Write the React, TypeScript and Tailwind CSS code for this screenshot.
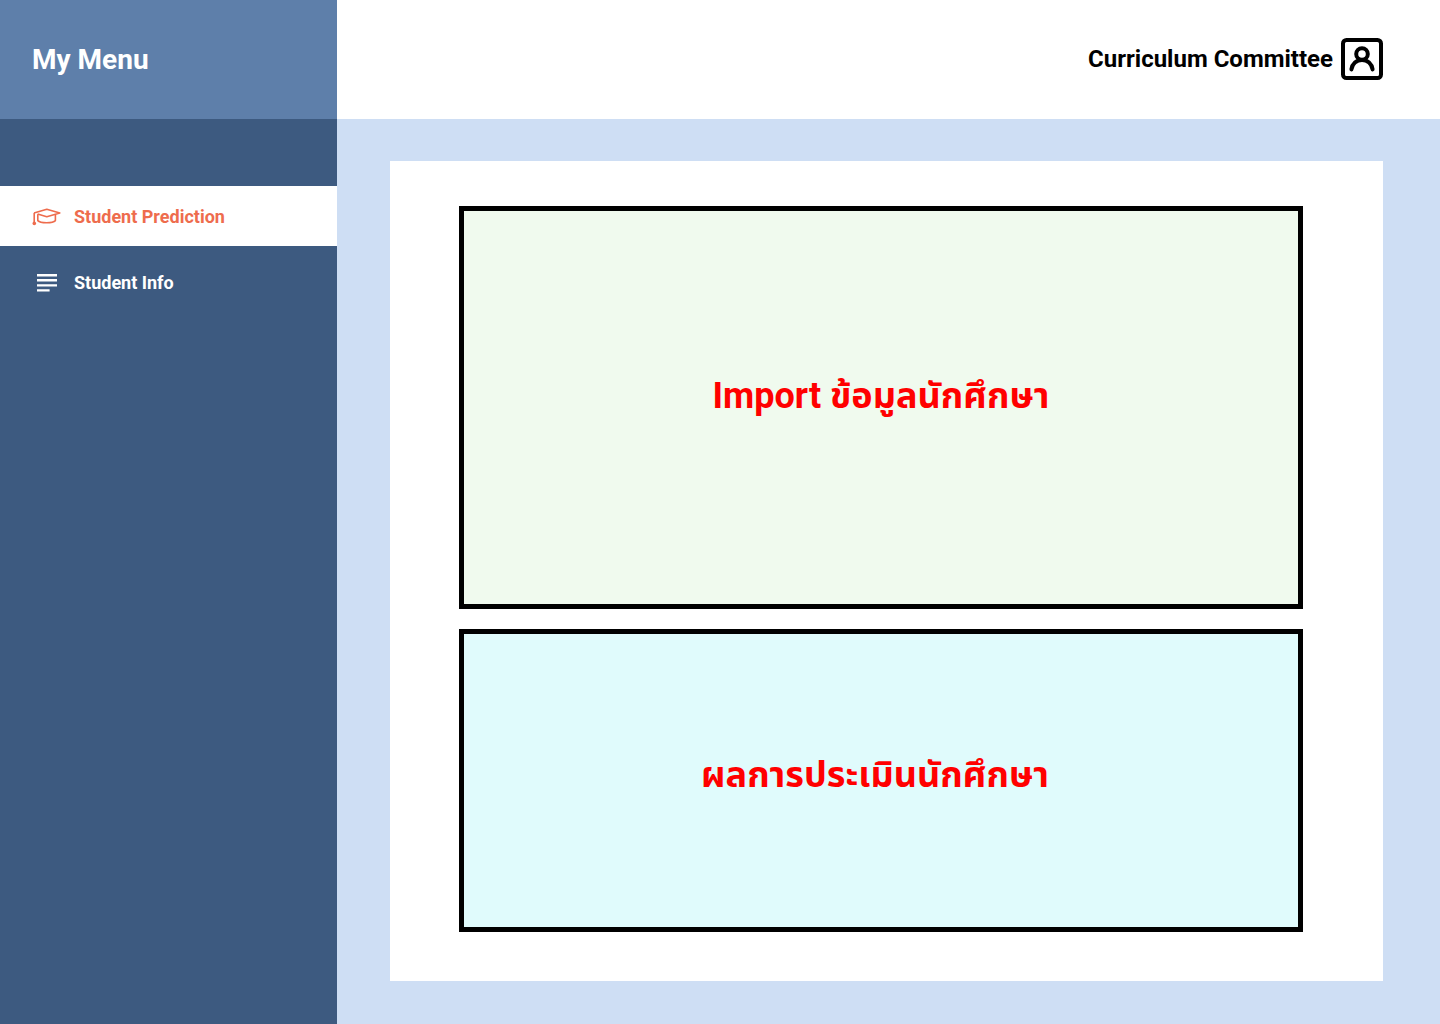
import React from "react";

function CapIcon() {
  return (
    <svg className="h-[18px] w-[30px] shrink-0" viewBox="0 0 30 18" fill="none" stroke="currentColor" strokeWidth="1.6" strokeLinejoin="round" aria-hidden="true">
      <path d="M2 5 14.8 1.2 27.8 5 14.8 8.8 5.6 6" />
      <path d="M2.2 5V14.5" />
      <path d="M5.8 6.2V12.6C8.4 15.4 20.8 15.4 23.4 12.6V6.4" />
      <circle cx="2.3" cy="15.4" r="1.8" fill="currentColor" stroke="none" />
    </svg>
  );
}

function LinesIcon() {
  return (
    <svg className="h-[18px] w-[30px] shrink-0" viewBox="0 0 30 18" fill="currentColor" aria-hidden="true">
      <path d="M5 0h20v2.4H5zM5 5h20v2.4H5zM5 10.2h20v2.4H5zM5 15.2h12.6v2.4H5z" />
    </svg>
  );
}

function UserIcon() {
  return (
    <svg className="size-[42px] shrink-0" viewBox="0 0 42 42" fill="none" stroke="currentColor" strokeWidth="4" strokeLinecap="round" aria-hidden="true">
      <rect x="2" y="2" width="38" height="38" rx="3.5" />
      <circle cx="21" cy="16" r="5.8" />
      <path d="M10.4 31.4C11.2 25.8 15.5 21.9 21 21.9S30.8 25.8 31.6 31.4" />
    </svg>
  );
}

export default function App() {
  return (
    <div className="flex min-h-screen bg-[#cedef4] font-['Roboto','Noto_Sans_Thai','Noto_Sans',sans-serif]">
      <aside className="w-[337px] shrink-0 bg-[#3d5a80] text-white">
        <div className="flex h-[119px] items-center bg-[#5e7faa] px-8">
          <h1 className="text-[28px] leading-8 font-bold">My Menu</h1>
        </div>
        <nav className="mt-[67px] flex flex-col gap-1.5 text-lg font-bold" aria-label="My Menu">
          <a href="#prediction" aria-current="page" className="flex h-[60px] items-center gap-3 bg-white pt-0.5 pl-8 text-[#ee6c4d]">
            <CapIcon />
            Student Prediction
          </a>
          <a href="#info" className="flex h-[60px] items-center gap-3 pt-0.5 pl-8">
            <LinesIcon />
            Student Info
          </a>
        </nav>
      </aside>
      <div className="flex min-w-0 flex-1 flex-col">
        <header className="flex h-[119px] items-center justify-end gap-2 bg-white pr-[57px] pb-px text-black">
          <span className="text-2xl leading-[33px] font-bold">Curriculum Committee</span>
          <UserIcon />
        </header>
        <main className="flex flex-1 pt-[42px] pr-[57px] pb-[43px] pl-[53px]">
          <div className="grid flex-1 grid-rows-[403fr_303fr] gap-5 bg-white pt-[45px] pr-20 pb-[49px] pl-[69px] text-4xl font-bold text-[#ff0000]">
            <section className="flex items-center justify-center border-5 border-black bg-[#f0faee] pb-6">
              <h2>Import ข้อมูลนักศึกษา</h2>
            </section>
            <section className="flex items-center justify-center border-5 border-black bg-[#e0fbfc] pr-3 pb-3">
              <h2>ผลการประเมินนักศึกษา</h2>
            </section>
          </div>
        </main>
      </div>
    </div>
  );
}
